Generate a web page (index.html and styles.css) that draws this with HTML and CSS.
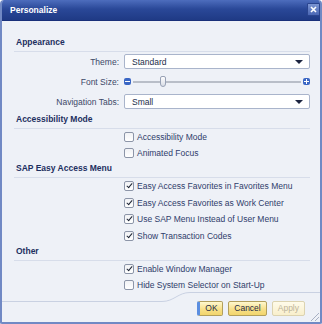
FILE: index.html
```html
<!DOCTYPE html>
<html lang="en">
<head>
  <meta charset="UTF-8">
  <title>Personalize</title>
  <link rel="stylesheet" href="styles.css">
</head>
<body>
  <div class="dialog">
    <div class="titlebar">
      <span class="title">Personalize</span>
      <span class="close">
        <svg width="7" height="7" viewBox="0 0 7 7"><path d="M1 1L6 6M6 1L1 6" stroke="#fff" stroke-width="1.6"/></svg>
      </span>
    </div>

    <div class="content">
      <div class="section-title">Appearance</div>
      <div class="field">
        <label>Theme:</label>
        <div class="select">Standard<span class="arrow"></span></div>
      </div>
      <div class="field">
        <label>Font Size:</label>
        <div class="slider">
          <span class="step minus"></span>
          <span class="track"><span class="thumb"></span></span>
          <span class="step plus"></span>
        </div>
      </div>
      <div class="field">
        <label>Navigation Tabs:</label>
        <div class="select">Small<span class="arrow"></span></div>
      </div>

      <div class="section-title">Accessibility Mode</div>
      <div class="check"><span class="box"></span>Accessibility Mode</div>
      <div class="check"><span class="box"></span>Animated Focus</div>

      <div class="section-title">SAP Easy Access Menu</div>
      <div class="check"><span class="box checked"></span>Easy Access Favorites in Favorites Menu</div>
      <div class="check"><span class="box checked"></span>Easy Access Favorites as Work Center</div>
      <div class="check"><span class="box checked"></span>Use SAP Menu Instead of User Menu</div>
      <div class="check"><span class="box checked"></span>Show Transaction Codes</div>

      <div class="section-title">Other</div>
      <div class="check"><span class="box checked"></span>Enable Window Manager</div>
      <div class="check"><span class="box"></span>Hide System Selector on Start-Up</div>
    </div>

    <div class="footer">
      <svg class="footer-line" width="318" height="12" viewBox="0 0 318 12">
        <path d="M0 10.5H160C172 10.5 176 1.5 188 1.5H318" fill="none" stroke="#c9d1e2"/>
      </svg>
      <button class="btn default">OK</button>
      <button class="btn">Cancel</button>
      <button class="btn disabled">Apply</button>
      <span class="grip"></span>
    </div>
  </div>
</body>
</html>
```

FILE: styles.css
```css
* {
  margin: 0;
  padding: 0;
  box-sizing: border-box;
}

body {
  font-family: "Liberation Sans", Arial, sans-serif;
  font-size: 8.5px;
  background-color: #fff;
}

.dialog {
  width: 322px;
  height: 324px;
  display: flex;
  flex-direction: column;
  background-color: #eef1f7;
  border: 2px solid #7189c4;
  border-top: none;
  border-radius: 4px 4px 2px 2px;
  overflow: hidden;
}

.titlebar {
  height: 22px;
  margin: 0 -2px;
  padding: 0 2px 0 10px;
  display: flex;
  align-items: center;
  justify-content: space-between;
  background: linear-gradient(#4d6dbd, #2a4898 45%, #1f3a85);
  border-bottom: 1px solid #19307a;
}

.title {
  color: #fff;
  font-weight: bold;
}

.close {
  width: 13px;
  height: 13px;
  display: flex;
  align-items: center;
  justify-content: center;
  background: linear-gradient(#7c95d2, #4a67b5);
  border: 1px solid #2b458f;
  border-radius: 1px;
}

.content {
  flex: 1;
  padding: 14px 10px 0 12px;
  display: flex;
  flex-direction: column;
}

.section-title {
  height: 17px;
  line-height: 15px;
  padding-left: 2px;
  font-weight: bold;
  color: #1d2f5f;
  border-bottom: 1px solid #d7ddea;
}

.field {
  height: 20px;
  display: grid;
  grid-template-columns: 105px 1fr;
  column-gap: 5px;
  align-items: center;
}

.field label {
  text-align: right;
  color: #3c4867;
}

.select {
  height: 15px;
  padding: 0 7px;
  display: flex;
  align-items: center;
  justify-content: space-between;
  color: #222d4a;
  background-color: #fff;
  border: 1px solid #a9b4cb;
  border-radius: 2px;
}

.arrow {
  width: 0;
  height: 0;
  border-left: 4px solid transparent;
  border-right: 4px solid transparent;
  border-top: 4px solid #1c2440;
  margin-right: -1px;
}

.slider {
  display: flex;
  align-items: center;
  gap: 2px;
}

.step {
  width: 7px;
  height: 7px;
  border-radius: 2px;
  background: #3a66c4;
  display: flex;
  align-items: center;
  justify-content: center;
  position: relative;
}

.step::before {
  content: "";
  width: 5px;
  height: 1px;
  background: #fff;
}

.plus::after {
  content: "";
  position: absolute;
  width: 1px;
  height: 5px;
  background: #fff;
}

.track {
  flex: 1;
  height: 2px;
  background: #b9bec8;
  position: relative;
}

.thumb {
  position: absolute;
  left: 27px;
  top: -5px;
  width: 6px;
  height: 11px;
  background: linear-gradient(#fdfdfe, #d9dde6);
  border: 1px solid #98a2b6;
  border-radius: 2px 2px 3px 3px;
}

.check {
  height: 16.4px;
  padding-left: 110px;
  display: flex;
  align-items: center;
  gap: 3px;
  color: #2f3d6b;
}

.box {
  width: 10px;
  height: 10px;
  background: linear-gradient(#f1f2f5, #fff);
  border: 1px solid #8c95a8;
  border-radius: 2px;
  display: flex;
  align-items: center;
  justify-content: center;
}

.box.checked::before {
  content: "";
  width: 2px;
  height: 5px;
  margin-top: -2px;
  border-right: 1.5px solid #1d2535;
  border-bottom: 1.5px solid #1d2535;
  transform: rotate(40deg);
}

.footer {
  height: 30px;
  position: relative;
  display: flex;
  align-items: flex-start;
  justify-content: flex-end;
  gap: 5px;
  padding: 7px 15px 0 0;
}

.footer-line {
  position: absolute;
  left: 0;
  top: -3px;
}

.btn {
  height: 15px;
  padding: 0 5px;
  font-family: inherit;
  font-size: 8.5px;
  color: #1f2a44;
  background: linear-gradient(#fff8cf, #f7e08a 55%, #f2d56c);
  border: 1px solid #b29f5c;
  border-radius: 2px;
}

.btn.default {
  width: 26px;
  border-left: 3px solid #5b8ee0;
}

.btn.disabled {
  color: #bcb39a;
  background: linear-gradient(#fffbea, #f8efcc);
  border-color: #dcd3b0;
}

.grip {
  position: absolute;
  right: 1px;
  bottom: 1px;
  width: 10px;
  height: 10px;
  background: repeating-linear-gradient(135deg, transparent 0 2px, #a7b0c4 2px 3px);
  clip-path: polygon(100% 0, 100% 100%, 0 100%);
}
```
